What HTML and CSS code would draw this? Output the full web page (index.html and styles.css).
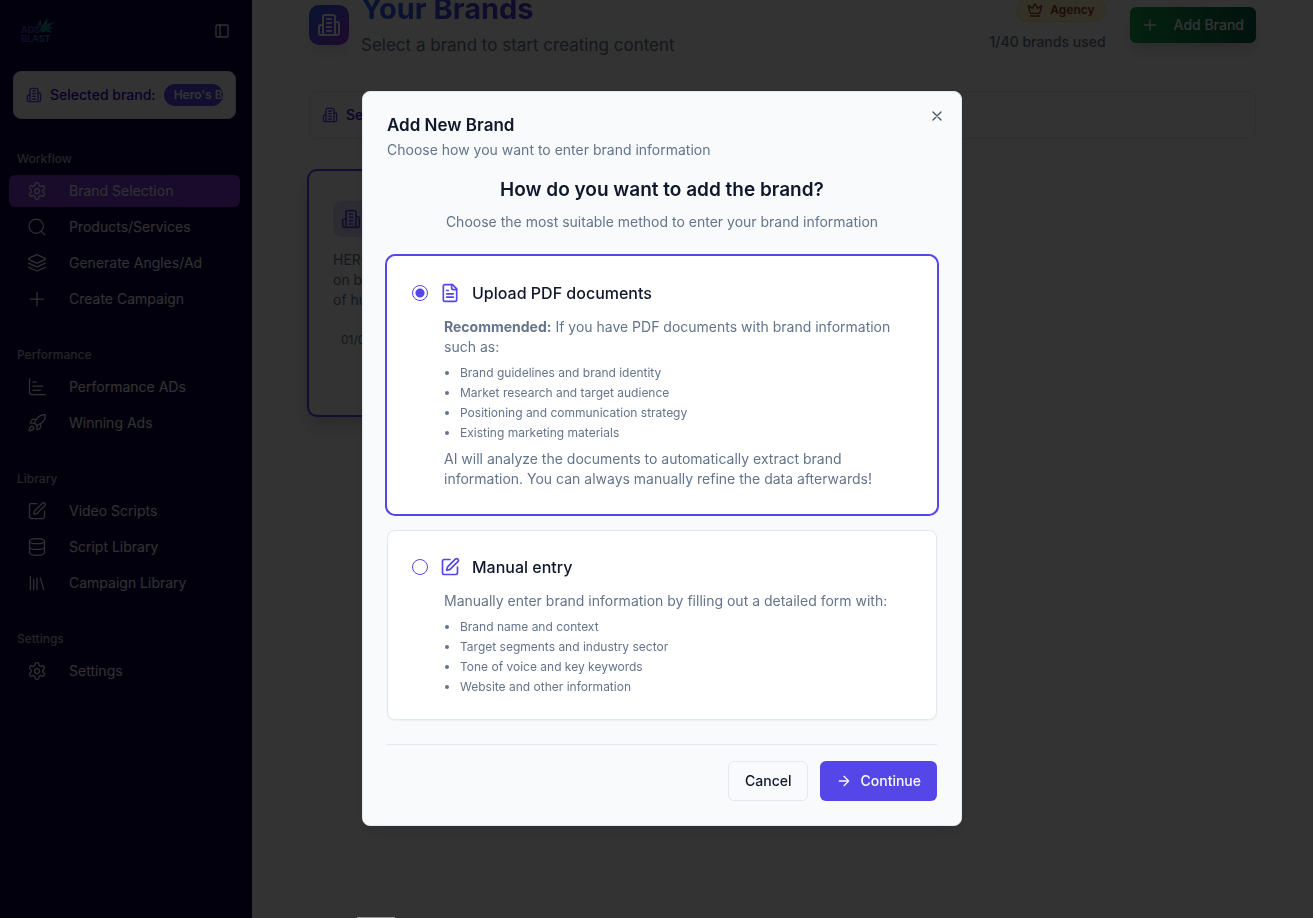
FILE: index.html
```html
<!DOCTYPE html>
<html lang="en">
<head>
    <meta charset="UTF-8">
    <meta name="viewport" content="width=device-width, initial-scale=1.0">
    <title>Your Brands - Ads Blast</title>
    <link rel="stylesheet" href="styles.css">
</head>
<body>
    <!-- Shared icons -->
    <svg class="sprite" aria-hidden="true">
        <symbol id="building" viewBox="0 0 24 24">
            <path d="M6 22V4a2 2 0 0 1 2-2h8a2 2 0 0 1 2 2v18Z"/>
            <path d="M6 12H4a2 2 0 0 0-2 2v6a2 2 0 0 0 2 2h2"/>
            <path d="M18 9h2a2 2 0 0 1 2 2v9a2 2 0 0 1-2 2h-2"/>
            <path d="M10 6h4M10 10h4M10 14h4M10 18h4"/>
        </symbol>
        <symbol id="settings" viewBox="0 0 24 24">
            <path d="M12.22 2h-.44a2 2 0 0 0-2 2v.18a2 2 0 0 1-1 1.73l-.43.25a2 2 0 0 1-2 0l-.15-.08a2 2 0 0 0-2.73.73l-.22.38a2 2 0 0 0 .73 2.73l.15.1a2 2 0 0 1 1 1.72v.51a2 2 0 0 1-1 1.74l-.15.09a2 2 0 0 0-.73 2.73l.22.38a2 2 0 0 0 2.73.73l.15-.08a2 2 0 0 1 2 0l.43.25a2 2 0 0 1 1 1.73V20a2 2 0 0 0 2 2h.44a2 2 0 0 0 2-2v-.18a2 2 0 0 1 1-1.73l.43-.25a2 2 0 0 1 2 0l.15.08a2 2 0 0 0 2.73-.73l.22-.39a2 2 0 0 0-.73-2.73l-.15-.08a2 2 0 0 1-1-1.74v-.5a2 2 0 0 1 1-1.74l.15-.09a2 2 0 0 0 .73-2.73l-.22-.38a2 2 0 0 0-2.73-.73l-.15.08a2 2 0 0 1-2 0l-.43-.25a2 2 0 0 1-1-1.73V4a2 2 0 0 0-2-2z"/>
            <circle cx="12" cy="12" r="3"/>
        </symbol>
        <symbol id="plus" viewBox="0 0 24 24">
            <path d="M4 12h16M12 4v16"/>
        </symbol>
        <symbol id="pen" viewBox="0 0 24 24">
            <path d="M12 3H5a2 2 0 0 0-2 2v14a2 2 0 0 0 2 2h14a2 2 0 0 0 2-2v-7"/>
            <path d="M18.375 2.625a1 1 0 0 1 3 3l-9.013 9.014a2 2 0 0 1-.853.505l-2.873.84a.5.5 0 0 1-.62-.62l.84-2.873a2 2 0 0 1 .506-.852z"/>
        </symbol>
    </svg>

    <div class="app">
        <aside class="sidebar">
            <div class="sidebar-top">
                <svg class="logo" viewBox="0 0 34 26" role="img" aria-label="Ads Blast">
                    <defs>
                        <linearGradient id="logoFill" gradientUnits="userSpaceOnUse" x1="0" x2="30">
                            <stop offset="0" stop-color="#5b2fd6"/>
                            <stop offset="1" stop-color="#1290b4"/>
                        </linearGradient>
                    </defs>
                    <path fill="#6a6080" d="M16 7 20 1 20 8Z"/>
                    <path fill="#128a96" d="M20 8 27 0 26 6 33 4 28 9 33 10 28 11 31 15 25 13 22 15 19 13Z"/>
                    <text x="0" y="15" fill="url(#logoFill)">ADS</text>
                    <text x="0" y="24" fill="url(#logoFill)">BLAST</text>
                </svg>
                <button class="icon-button" type="button" aria-label="Toggle sidebar">
                    <svg class="icon icon-sm" viewBox="0 0 24 24">
                        <rect x="3" y="3" width="18" height="18" rx="2"/>
                        <path d="M9 3v18"/>
                    </svg>
                </button>
            </div>

            <div class="selected-brand">
                <svg class="icon icon-sm"><use href="#building"/></svg>
                <span class="selected-label">Selected brand:</span>
                <span class="selected-name">Hero's Box</span>
            </div>

            <nav class="nav">
                <section class="nav-group">
                    <h2>Workflow</h2>
                    <a class="nav-item active" href="#"><svg class="icon"><use href="#settings"/></svg>Brand Selection</a>
                    <a class="nav-item" href="#"><svg class="icon" viewBox="0 0 24 24"><circle cx="11" cy="11" r="8.5"/><path d="m21.5 21.5-4.3-4.3"/></svg>Products/Services</a>
                    <a class="nav-item" href="#"><svg class="icon" viewBox="0 0 24 24"><path d="m12.83 2.18a2 2 0 0 0-1.66 0L2.6 6.08a1 1 0 0 0 0 1.83l8.58 3.91a2 2 0 0 0 1.66 0l8.58-3.9a1 1 0 0 0 0-1.83Z"/><path d="m22 12.2-9.17 4.16a2 2 0 0 1-1.66 0L2 12.2"/><path d="m22 17.2-9.17 4.16a2 2 0 0 1-1.66 0L2 17.2"/></svg>Generate Angles/Ad</a>
                    <a class="nav-item" href="#"><svg class="icon"><use href="#plus"/></svg>Create Campaign</a>
                </section>
                <section class="nav-group">
                    <h2>Performance</h2>
                    <a class="nav-item" href="#"><svg class="icon" viewBox="0 0 24 24"><path d="M3 2v17a2 2 0 0 0 2 2h17"/><path d="M7 6h4M7 11h12M7 16h9"/></svg>Performance ADs</a>
                    <a class="nav-item" href="#"><svg class="icon" viewBox="0 0 24 24"><path d="M4.5 16.5c-1.5 1.26-2 5-2 5s3.74-.5 5-2c.71-.84.7-2.13-.09-2.91a2.18 2.18 0 0 0-2.91-.09z"/><path d="m12 15-3-3a22 22 0 0 1 2-3.95A12.88 12.88 0 0 1 22 2c0 2.72-.78 7.5-6 11a22.35 22.35 0 0 1-4 2z"/><path d="M9 12H4s.55-3.03 2-4c1.62-1.08 5 0 5 0"/><path d="M12 15v5s3.03-.55 4-2c1.08-1.62 0-5 0-5"/></svg>Winning Ads</a>
                </section>
                <section class="nav-group">
                    <h2>Library</h2>
                    <a class="nav-item" href="#"><svg class="icon"><use href="#pen"/></svg>Video Scripts</a>
                    <a class="nav-item" href="#"><svg class="icon" viewBox="0 0 24 24"><ellipse cx="12" cy="5" rx="9" ry="3"/><path d="M3 5v14a9 3 0 0 0 18 0V5"/><path d="M3 12a9 3 0 0 0 18 0"/></svg>Script Library</a>
                    <a class="nav-item" href="#"><svg class="icon" viewBox="0 0 24 24"><path d="m16 6 4 14M12 6v14M8 8v12M4 4v16"/></svg>Campaign Library</a>
                </section>
                <section class="nav-group">
                    <h2>Settings</h2>
                    <a class="nav-item" href="#"><svg class="icon"><use href="#settings"/></svg>Settings</a>
                </section>
            </nav>
        </aside>

        <main class="main">
            <header class="page-header">
                <div class="page-icon"><svg class="icon icon-lg"><use href="#building"/></svg></div>
                <div class="page-title">
                    <h1>Your Brands</h1>
                    <p>Select a brand to start creating content</p>
                </div>
                <div class="plan">
                    <span class="plan-badge">
                        <svg class="icon icon-sm" viewBox="0 0 24 24"><path d="M11.562 3.266a.5.5 0 0 1 .876 0L15.39 8.87a1 1 0 0 0 1.516.294L21.183 5.5a.5.5 0 0 1 .798.519l-2.834 10.246a1 1 0 0 1-.956.734H5.81a1 1 0 0 1-.957-.734L2.02 6.02a.5.5 0 0 1 .798-.519l4.276 3.664a1 1 0 0 0 1.516-.294z"/><path d="M5 21h14"/></svg>
                        Agency
                    </span>
                    <span class="plan-usage">1/40 brands used</span>
                </div>
                <button class="add-button" type="button"><svg class="icon icon-sm"><use href="#plus"/></svg>Add Brand</button>
            </header>

            <div class="brand-bar">
                <svg class="icon icon-sm"><use href="#building"/></svg>
                <span class="selected-label">Selected brand:</span>
            </div>

            <div class="brand-grid">
                <article class="brand-card">
                    <div class="brand-card-icon"><svg class="icon"><use href="#building"/></svg></div>
                    <p>HERO'S is a brand focused<br>on better products made<br>of human stories</p>
                    <time>01/09/2025</time>
                </article>
            </div>
        </main>
    </div>

    <div class="overlay">
        <div class="dialog" role="dialog" aria-modal="true" aria-labelledby="dialogTitle">
            <button class="close-button" type="button" aria-label="Close">
                <svg class="icon icon-sm" viewBox="0 0 24 24"><path d="M18 6 6 18M6 6l12 12"/></svg>
            </button>
            <h2 id="dialogTitle">Add New Brand</h2>
            <p class="dialog-text">Choose how you want to enter brand information</p>

            <form>
                <div class="intro">
                    <h3>How do you want to add the brand?</h3>
                    <p>Choose the most suitable method to enter your brand information</p>
                </div>

                <div class="options">
                    <div class="option selected">
                        <div class="option-head">
                            <input type="radio" name="method" id="pdf" checked>
                            <label for="pdf">
                                <svg class="icon" viewBox="0 0 24 24"><path d="M15 2H6a2 2 0 0 0-2 2v16a2 2 0 0 0 2 2h12a2 2 0 0 0 2-2V7Z"/><path d="M14 2v4a2 2 0 0 0 2 2h4"/><path d="M10 9H8M16 13H8M16 17H8"/></svg>
                                Upload PDF documents
                            </label>
                        </div>
                        <div class="option-body">
                            <p><strong>Recommended:</strong> If you have PDF documents with brand information such as:</p>
                            <ul>
                                <li>Brand guidelines and brand identity</li>
                                <li>Market research and target audience</li>
                                <li>Positioning and communication strategy</li>
                                <li>Existing marketing materials</li>
                            </ul>
                            <p>AI will analyze the documents to automatically extract brand information. You can always manually refine the data afterwards!</p>
                        </div>
                    </div>

                    <div class="option">
                        <div class="option-head">
                            <input type="radio" name="method" id="manual">
                            <label for="manual">
                                <svg class="icon"><use href="#pen"/></svg>
                                Manual entry
                            </label>
                        </div>
                        <div class="option-body">
                            <p>Manually enter brand information by filling out a detailed form with:</p>
                            <ul>
                                <li>Brand name and context</li>
                                <li>Target segments and industry sector</li>
                                <li>Tone of voice and key keywords</li>
                                <li>Website and other information</li>
                            </ul>
                        </div>
                    </div>
                </div>

                <div class="actions">
                    <button class="button" type="button">Cancel</button>
                    <button class="button primary" type="submit">
                        <svg class="icon icon-sm" viewBox="0 0 24 24"><path d="M5 12h14M12 5l7 7-7 7"/></svg>
                        Continue
                    </button>
                </div>
            </form>
        </div>
    </div>
    <div class="status-peek"></div>
</body>
</html>
```
FILE: styles.css
```css
* {
    box-sizing: border-box;
}

body {
    margin: 0;
    height: 100vh;
    overflow: hidden;
    font-family: Inter, "Liberation Sans", sans-serif;
    font-size: 14px;
    line-height: 20px;
    color: #0f172a;
    background: #fff;
}

h1, h2, h3, p, ul {
    margin: 0;
}

button {
    font: inherit;
    cursor: pointer;
}

.sprite {
    display: none;
}

.icon {
    width: 20px;
    height: 20px;
    flex-shrink: 0;
    fill: none;
    stroke: currentColor;
    stroke-width: 2;
    stroke-linecap: round;
    stroke-linejoin: round;
}

.icon-sm {
    width: 16px;
    height: 16px;
}

.icon-lg {
    width: 24px;
    height: 24px;
}

.app {
    display: flex;
    height: 100%;
}

/* Sidebar */
.sidebar {
    width: 252px;
    flex-shrink: 0;
    padding: 14px 12px 0 9px;
    background: #0f0040;
    color: #f1f5f9;
}

.sidebar-top {
    display: flex;
    align-items: center;
    justify-content: space-between;
    height: 34px;
    padding: 0 2px 0 12px;
}

.logo {
    width: 34px;
    height: 26px;
    font-size: 9px;
    font-weight: 700;
}

.icon-button {
    display: flex;
    padding: 8px;
    border: 0;
    background: none;
    color: inherit;
}

.selected-brand {
    display: flex;
    align-items: center;
    gap: 8px;
    height: 48px;
    margin: 23px 4px 24px;
    padding: 0 12px;
    border: 1px solid #e2e8f0;
    border-radius: 8px;
    background: #fff;
    color: #5b45e8;
}

.selected-label {
    flex-shrink: 0;
    font-weight: 500;
    color: #3b00c4;
}

.selected-name {
    flex: 1;
    min-width: 0;
    overflow: hidden;
    padding: 3px 0 3px 10px;
    border-radius: 11px;
    background: #5546e8;
    color: #fff;
    font-size: 12px;
    font-weight: 600;
    line-height: 16px;
    white-space: nowrap;
}

.nav {
    display: flex;
    flex-direction: column;
    gap: 24px;
}

.nav-group {
    display: flex;
    flex-direction: column;
    gap: 4px;
}

.nav-group h2 {
    margin-bottom: -4px;
    padding: 0 8px;
    font-size: 12px;
    font-weight: 500;
    line-height: 32px;
    color: #b4b2bf;
}

.nav-item {
    display: flex;
    align-items: center;
    gap: 22px;
    height: 32px;
    margin-right: 3px;
    padding: 0 18px;
    border-radius: 6px;
    color: inherit;
    text-decoration: none;
}

.nav-item .icon {
    stroke-width: 1.5;
}

.nav-item.active {
    margin-right: 0;
    background: linear-gradient(90deg, #7e3fd8, #8033d4);
}

/* Page */
.main {
    flex: 1;
    min-width: 0;
    padding: 0 57px;
}

.page-header {
    display: flex;
    align-items: center;
    margin-top: -9px;
}

.page-icon {
    display: flex;
    align-items: center;
    justify-content: center;
    width: 40px;
    height: 40px;
    border-radius: 10px;
    background: linear-gradient(135deg, #2563eb, #9333ea);
    color: #fff;
    box-shadow: 0 10px 15px -3px rgba(0, 0, 0, 0.1);
}

.page-title {
    flex: 1;
    margin-left: 12px;
}

.page-title h1 {
    width: fit-content;
    font-size: 29px;
    line-height: 36px;
    background: linear-gradient(90deg, #2563eb, #5b35c8);
    background-clip: text;
    color: transparent;
}

.page-title p {
    margin-top: 4px;
    font-size: 17px;
    line-height: 28px;
    color: #64748b;
}

.plan {
    display: flex;
    flex-direction: column;
    align-items: flex-end;
    gap: 10px;
    margin-right: 24px;
}

.plan-badge {
    display: flex;
    align-items: center;
    gap: 7px;
    padding: 3px 10px;
    border: 1px solid #fde68a;
    border-radius: 12px;
    background: #fef3c7;
    color: #92400e;
    font-size: 12px;
    font-weight: 600;
    line-height: 16px;
}

.plan-usage {
    font-weight: 500;
    color: #64748b;
}

.add-button {
    display: flex;
    align-items: center;
    gap: 16px;
    height: 36px;
    padding: 0 12px;
    border: 0;
    border-radius: 6px;
    background: linear-gradient(90deg, #16a34a, #065f46);
    color: #fff;
    font-weight: 500;
    box-shadow: 0 10px 15px -3px rgba(0, 0, 0, 0.15);
}

.brand-bar {
    display: flex;
    align-items: center;
    gap: 8px;
    height: 48px;
    margin-top: 32px;
    padding: 0 12px;
    border: 1px solid #e2e8f0;
    border-radius: 8px;
    color: #5b45e8;
}

.brand-grid {
    display: grid;
    grid-template-columns: repeat(3, 1fr);
    gap: 24px;
    margin-top: 32px;
}

.brand-card {
    height: 244px;
    padding: 30px 24px;
    border-radius: 8px;
    box-shadow: 0 0 0 2px #5546e8, 0 10px 20px rgba(0, 0, 0, 0.2);
    color: #64748b;
}

.brand-card-icon {
    display: flex;
    align-items: center;
    justify-content: center;
    width: 36px;
    height: 36px;
    margin-bottom: 13px;
    border-radius: 8px;
    background: #ddd9fb;
    color: #5546e8;
}

.brand-card time {
    display: block;
    margin: 20px 8px 0;
    font-size: 12px;
}

/* Dialog */
.overlay {
    position: fixed;
    inset: 0;
    display: flex;
    align-items: center;
    justify-content: center;
    padding: 0 0 1px 11px;
    background: rgba(0, 0, 0, 0.8);
}

.dialog {
    position: relative;
    width: 600px;
    max-width: 100%;
    padding: 24px;
    border: 1px solid #e2e8f0;
    border-radius: 8px;
    background: #f8fafc;
    box-shadow: 0 10px 15px -3px rgba(0, 0, 0, 0.1);
}

.dialog h2 {
    font-size: 17px;
    font-weight: 600;
    line-height: 18px;
}

.dialog-text {
    margin-top: 6px;
    color: #64748b;
}

.close-button {
    position: absolute;
    top: 16px;
    right: 16px;
    display: flex;
    padding: 0;
    border: 0;
    background: none;
    color: #475569;
}

.intro {
    margin: 16px 0 24px;
    text-align: center;
}

.intro h3 {
    font-size: 19px;
    font-weight: 600;
    line-height: 28px;
}

.intro p {
    margin-top: 8px;
    color: #64748b;
}

.options {
    display: flex;
    flex-direction: column;
    gap: 16px;
}

.option {
    padding: 24px;
    border: 1px solid #e2e8f0;
    border-radius: 8px;
    background: #fff;
    box-shadow: 0 1px 2px rgba(0, 0, 0, 0.05);
}

.option.selected {
    border-color: #fff;
    box-shadow: 0 0 0 2px #5546e8;
}

.option-head {
    display: flex;
    align-items: center;
    gap: 12px;
}

.option-head label {
    display: flex;
    align-items: center;
    gap: 12px;
    font-size: 16px;
    font-weight: 500;
    line-height: 24px;
}

.option-head .icon {
    color: #5546e8;
}

.option input {
    appearance: none;
    width: 16px;
    height: 16px;
    margin: 0;
    border: 1px solid #5546e8;
    border-radius: 50%;
}

.option input:checked {
    background: radial-gradient(circle, #5546e8 4px, transparent 5px);
}

.option-body {
    margin: 12px 0 0 32px;
    color: #64748b;
}

.option-body ul {
    display: flex;
    flex-direction: column;
    gap: 4px;
    margin-top: 8px;
    padding-left: 16px;
    font-size: 12px;
    line-height: 16px;
}

.option-body ul + p {
    margin-top: 8px;
}

.actions {
    display: flex;
    justify-content: flex-end;
    gap: 12px;
    margin-top: 24px;
    padding-top: 16px;
    border-top: 1px solid #e2e8f0;
}

.button {
    display: flex;
    align-items: center;
    gap: 8px;
    height: 40px;
    padding: 0 16px;
    border: 1px solid #e2e8f0;
    border-radius: 6px;
    background: #f8fafc;
    color: #0f172a;
    font-weight: 500;
}

.button.primary {
    border: 0;
    background: #5546e8;
    color: #f8fafc;
}

/* Browser status bubble at the bottom edge */
.status-peek {
    position: fixed;
    bottom: 0;
    left: 357px;
    width: 38px;
    height: 1px;
    background: #999;
}
```
